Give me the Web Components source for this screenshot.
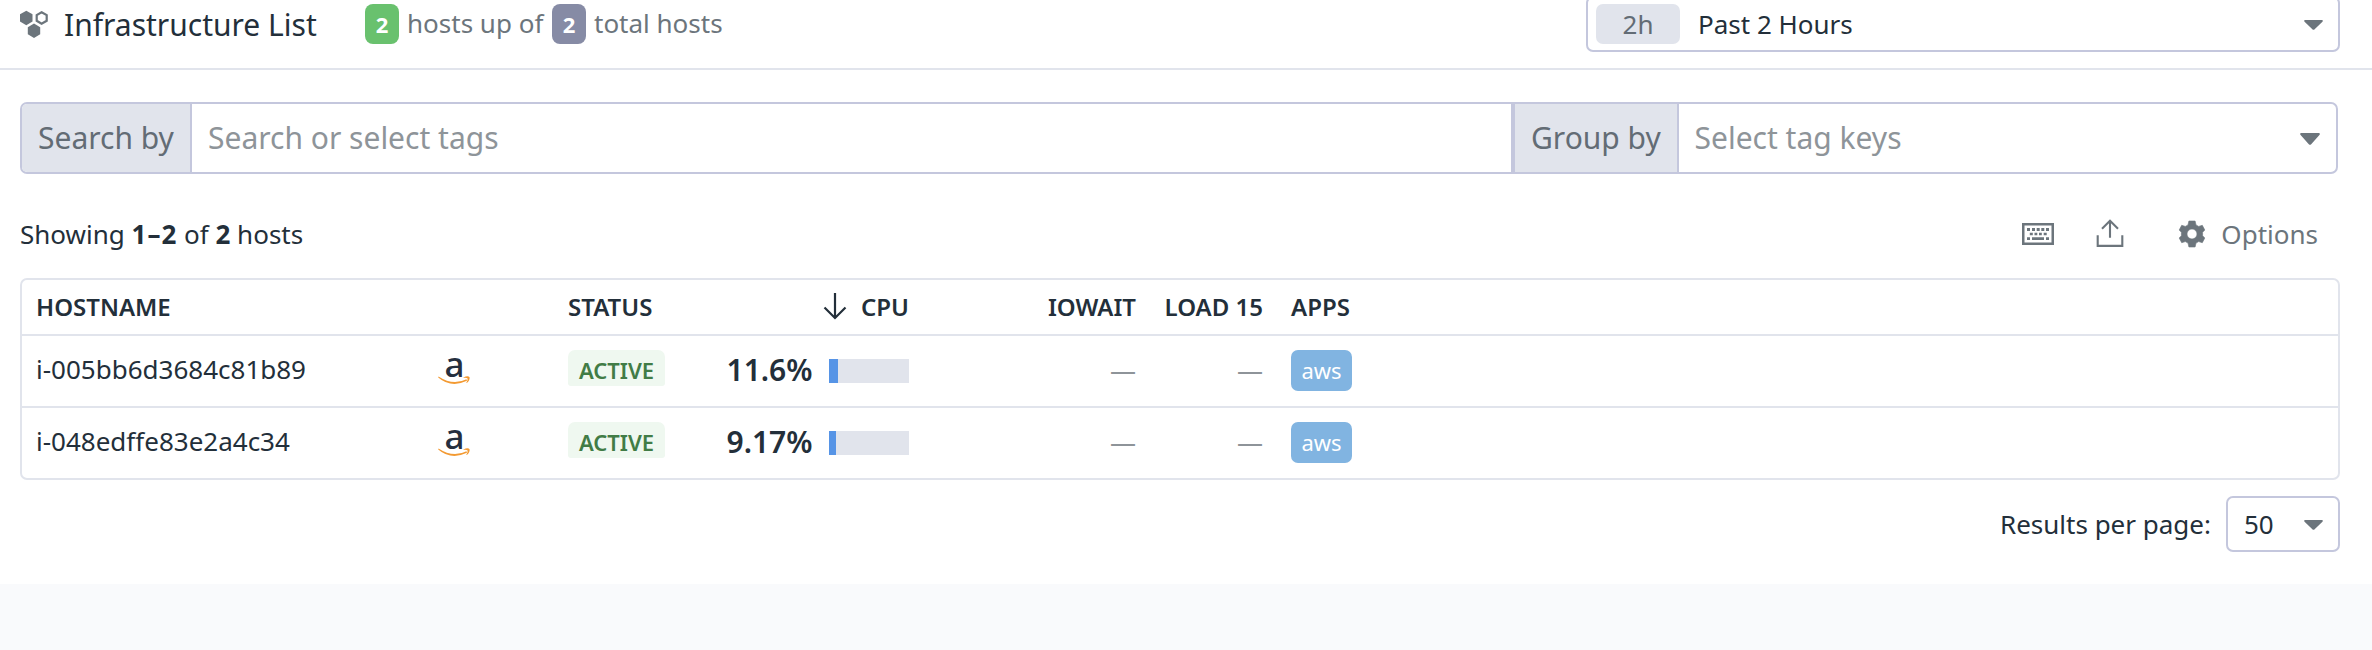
<!DOCTYPE html>
<html lang="en"><head><meta charset="utf-8"><title>Infrastructure List</title>
<style>
body{margin:0;background:#f9fafc;font-family:"Noto Sans",sans-serif;color:#232f3a;font-size:26px}
</style></head><body>
<infra-page></infra-page>
<script>
const define=(name,html)=>customElements.define(name,class extends HTMLElement{
  connectedCallback(){ if(this.shadowRoot)return; const t=document.createElement('template'); t.innerHTML=typeof html==='function'?html(this):html; this.attachShadow({mode:'open'}).append(t.content.cloneNode(true)); }
});

define('count-pill',`<style>:host{display:block;width:34px;height:40px;border-radius:8px;background:var(--pill);color:#fff;font:700 22px/40px "Noto Sans",sans-serif;text-align:center}</style><slot></slot>`);
define('caret-down',`<style>:host{display:block;width:20px;height:12px}svg{display:block;width:100%;height:100%}</style><svg viewBox="0 0 20 12" preserveAspectRatio="none"><path d="M.8 0H19.2Q20.4.9 19.4 2L11.2 11.2Q10 12.4 8.8 11.2L.6 2Q-.4.9.8 0Z" fill="#6c757c"/></svg>`);

define('page-header',`<style>
:host{display:flex;align-items:flex-start;height:68px;border-bottom:2px solid #e1e4ec;overflow:hidden;white-space:nowrap}
.logo{display:block;margin:10px 0 0 19px}
h1{margin:4px 0 0 15px;font-weight:400;font-size:30px;line-height:42px;width:301px}
.counts{display:flex;height:40px;margin-top:4px;gap:8px;color:#6c757c;line-height:38px}
.counts span{width:137px}
.range{margin:-4px 32px 0 auto;display:flex;align-items:center;box-sizing:border-box;width:754px;height:56px;border:2px solid #c4c7dd;border-radius:7px;padding:0 15px 0 8px}
.chip{width:84px;height:40px;border-radius:7px;background:#e1e4ec;color:#636c75;text-align:center;line-height:40px;margin-right:18px}
caret-down{margin:2px 0 0 auto;width:19px;height:10px}
</style>
<svg class="logo" width="30" height="29" viewBox="0 0 30 29"><g fill="#6c757c"><path d="M7.3.8 13.5 4.3V11.6L7.3 15.2 1 11.6V4.3Z"/><path d="M15 13.6 21.2 17.2V24.3L15 28 8.8 24.3V17.2Z"/></g><path d="M22.6 2.3 27.7 5.1V10.8L22.6 13.8 17.7 10.8V5.1Z" fill="none" stroke="#6c757c" stroke-width="2.2"/></svg>
<h1>Infrastructure List</h1>
<div class="counts"><count-pill style="--pill:#69c16e">2</count-pill><span>hosts up of</span><count-pill style="--pill:#868ba5">2</count-pill><span>total hosts</span></div>
<div class="range"><div class="chip">2h</div><span>Past 2 Hours</span><caret-down></caret-down></div>`);

define('filter-bar',`<style>
:host{display:flex;box-sizing:border-box;height:72px;width:2318px;margin:32px 0 0 20px;border:2px solid #c4c7dd;border-radius:7px;font-size:30px;line-height:68px;overflow:hidden;white-space:nowrap}
label{background:#e1e4ec;color:#636c75;box-sizing:border-box;padding-left:16px;border-right:2px solid #c4c7dd}
.s{width:170px}.g{width:168px;border-left:4px solid #c4c7dd}
.in{color:#8e9499;padding-left:16px}.first{width:1303px}
.g+.in{padding-left:15.5px}
caret-down{margin:29px 16px 0 auto}
</style><label class="s">Search by</label><span class="in first">Search or select tags</span><label class="g">Group by</label><span class="in">Select tag keys</span><caret-down></caret-down>`);

define('list-toolbar',`<style>
:host{display:flex;align-items:center;height:40px;margin:40px 0 0 20px;padding:0 54px 0 0;white-space:nowrap;line-height:40px}
b{font-weight:700}.n{letter-spacing:1px}.k{margin-left:auto}.u{margin-left:42px}.c{margin-left:54px}.o{color:#6c757c;margin-left:15px}
</style><span class="t">Showing <b class="n">1–2</b> of <b>2</b> hosts</span>
<svg class="k" width="32" height="22" viewBox="0 0 32 22" fill="#6c757c"><path fill-rule="evenodd" d="M0 0H32V22H0ZM2.5 2.5V19.5H29.5V2.5Z"/><path d="M5 5h3v3H5ZM10 5h3v3h-3ZM14.7 5h3v3h-3ZM19.3 5h3v3h-3ZM24 5h3v3h-3ZM7.8 9.7h3v2.6h-3ZM12.5 9.7h2.8v2.6h-2.8ZM17 9.7h2.8v2.6H17ZM21.7 9.7h3v2.6h-3ZM5 14.3h3V17H5ZM10 14.3H22V17H10ZM24 14.3h3V17h-3Z"/></svg>
<svg class="u" width="28" height="30" viewBox="0 0 28 30" fill="none" stroke="#6c757c" stroke-width="2.1"><path d="M1.7 16.2V26.9H26.3V16.2M14 18.8V2M6 9.8 14 1.8 22 9.8"/></svg>
<svg class="c" width="28" height="28" viewBox="0 0 28 28"><path fill="#6c757c" fill-rule="evenodd" stroke="#6c757c" stroke-width=".6" stroke-linejoin="round" d="M10.9 1H17.1L18 4.9 20.7 6.4 24.3 5.3 26.8 10 24.6 12.3V15.7L26.8 18 24.3 22.7 20.7 21.6 18 23.1 17.1 27H10.9L10 23.1 7.3 21.6 3.7 22.7 1.2 18 3.4 15.7V12.3L1.2 10 3.7 5.3 7.3 6.4 10 4.9ZM14 9A5 5 0 1 0 14 19 5 5 0 0 0 14 9Z"/></svg>
<span class="o">Options</span>`);

define('host-table',`<style>
:host{display:block;box-sizing:border-box;margin:24px 32px 0 20px;border:2px solid #e1e4ec;border-radius:7px;white-space:nowrap}
.head{display:grid;grid-template-columns:532px 140px 201px 227px 127px 1fr;height:54px;line-height:54px;font-weight:600;font-size:24px;padding-left:14px}
.head .r{text-align:right}.cpu{display:flex;justify-content:flex-end;align-items:center;gap:14px}
.apps{padding-left:28px}
</style><div class="head"><span>HOSTNAME</span><span>STATUS</span><span class="cpu"><svg width="24" height="28" viewBox="0 0 24 28" fill="none" stroke="#232f3a" stroke-width="2.2"><path d="M12 0V25M1.5 14.5 12 25 22.5 14.5"/></svg><span>CPU</span></span><span class="r">IOWAIT</span><span class="r">LOAD 15</span><span class="apps">APPS</span></div><slot></slot>`);

define('host-row',e=>`<style>
:host{display:grid;grid-template-columns:401px 131px 140px 201px 227px 127px 1fr;grid-template-rows:70px;align-items:center;height:70px;border-top:2px solid #e1e4ec;padding-left:14px}
.name{line-height:66px;height:70px}
.logo{display:block}
.st{width:97px;height:36px;background:#eff8f0;border-radius:7px 7px 3px 3px;color:#417c46;font-weight:600;font-size:22px;line-height:41px;text-align:center;margin-top:-6px}
.cpu{display:flex;align-items:center;justify-content:flex-end;gap:16.5px;font-weight:600;font-size:30px;line-height:68px}
.pct{height:70px}
.bar{width:80px;height:24px;background:#e1e4ec}.bar i{display:block;height:24px;background:#5694e6;width:${e.getAttribute('fill')}px}
.d{text-align:right;color:#8e9499;line-height:36px;height:38px}
.aws{justify-self:start;width:61px;height:41px;margin:-1px 0 0 28px;border-radius:7px;background:#81b4e1;color:#fff;font-size:22px;line-height:41px;text-align:center}
</style><span class="name">${e.getAttribute('name')}</span>
<svg class="logo" width="36" height="64" viewBox="0 -10 36 64"><text x="7.5" y="27.7" font-family="Noto Sans" font-weight="500" font-size="35" fill="#252f3e">a</text><g><path d="M1.5 27.5Q16 37 29.5 30.2L30 31.8Q14 39.4 1.2 28.4Z" fill="#f39a32"/><path d="M26.5 28.4Q31 26.3 32.6 28.2 33 31.5 29.8 34L29.3 33.7Q31 30.5 30.6 29.4 29.5 28.6 26.5 28.9Z" fill="#f39a32"/></g></svg>
<span class="st">ACTIVE</span><span class="cpu"><span class="pct">${e.getAttribute('cpu')}</span><span class="bar"><i></i></span></span><span class="d">—</span><span class="d">—</span><span class="aws">aws</span>`);

define('page-footer',`<style>
:host{display:flex;justify-content:flex-end;align-items:center;height:56px;margin:16px 32px 32px 0;gap:15px;white-space:nowrap}
.sel{display:flex;align-items:center;box-sizing:border-box;width:114px;height:56px;border:2px solid #c4c7dd;border-radius:7px;padding:0 15px 0 16px}
caret-down{margin:2px 0 0 auto;width:19px;height:10px}
</style><span>Results per page:</span><span class="sel">50<caret-down></caret-down></span>`);

define('infra-page',`<style>:host{display:flow-root;background:#fff;height:584px}</style>
<page-header></page-header><filter-bar></filter-bar><list-toolbar></list-toolbar>
<host-table><host-row name="i-005bb6d3684c81b89" cpu="11.6%" fill="9"></host-row><host-row name="i-048edffe83e2a4c34" cpu="9.17%" fill="7"></host-row></host-table>
<page-footer></page-footer>`);
</script></body></html>
